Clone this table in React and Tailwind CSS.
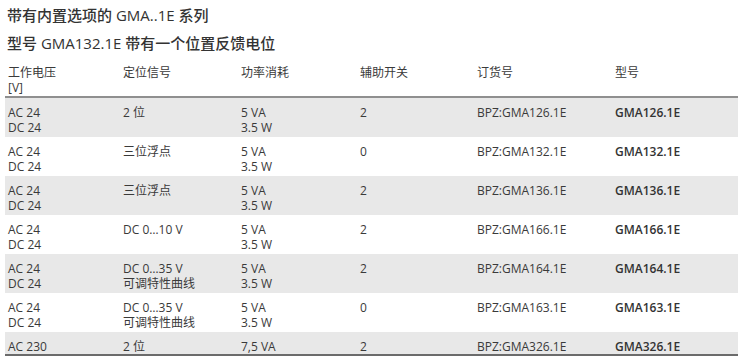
import React from 'react';

const rows = [
  { v: ['AC 24', 'DC 24'], sig: ['2 位'], pow: ['5 VA', '3.5 W'], aux: '2', order: 'BPZ:GMA126.1E', type: 'GMA126.1E' },
  { v: ['AC 24', 'DC 24'], sig: ['三位浮点'], pow: ['5 VA', '3.5 W'], aux: '0', order: 'BPZ:GMA132.1E', type: 'GMA132.1E' },
  { v: ['AC 24', 'DC 24'], sig: ['三位浮点'], pow: ['5 VA', '3.5 W'], aux: '2', order: 'BPZ:GMA136.1E', type: 'GMA136.1E' },
  { v: ['AC 24', 'DC 24'], sig: ['DC 0…10 V'], pow: ['5 VA', '3.5 W'], aux: '2', order: 'BPZ:GMA166.1E', type: 'GMA166.1E' },
  { v: ['AC 24', 'DC 24'], sig: ['DC 0…35 V', '可调特性曲线'], pow: ['5 VA', '3.5 W'], aux: '2', order: 'BPZ:GMA164.1E', type: 'GMA164.1E' },
  { v: ['AC 24', 'DC 24'], sig: ['DC 0…35 V', '可调特性曲线'], pow: ['5 VA', '3.5 W'], aux: '0', order: 'BPZ:GMA163.1E', type: 'GMA163.1E' },
  { v: ['AC 230'], sig: ['2 位'], pow: ['7,5 VA'], aux: '2', order: 'BPZ:GMA326.1E', type: 'GMA326.1E' },
];

const cols = 'grid grid-cols-[115px_118px_119px_117px_138px_1fr]';

const Lines = ({ items }) => (
  <div className="pl-[3px]">
    {items.map((t) => (
      <div key={t} className="leading-[15px]">{t}</div>
    ))}
  </div>
);

const App = () => {
  return (
    <div
      className="w-[740px] h-[364px] bg-white text-[#3a3a3a] overflow-hidden"
      style={{ fontFamily: '"Open Sans", "Noto Sans CJK SC", sans-serif' }}
    >
      <div className="pt-[5px] pl-[7px] text-[15px] leading-[20px] font-medium text-[#333]">
        <div>带有内置选项的 GMA..1E 系列</div>
        <div className="mt-[8px]">型号 GMA132.1E 带有一个位置反馈电位</div>
      </div>

      <div className="ml-[5px] mr-[2px] mt-[12px] text-[12px]">
        {/* header */}
        <div className={`${cols} border-b-2 border-[#8f8f8f] pb-[1px]`}>
          <Lines items={['工作电压', '[V]']} />
          <Lines items={['定位信号']} />
          <Lines items={['功率消耗']} />
          <Lines items={['辅助开关']} />
          <Lines items={['订货号']} />
          <Lines items={['型号']} />
        </div>

        {rows.map((r, i) => (
          <div
            key={r.order}
            className={`${cols} pt-[7px] ${i === rows.length - 1 ? 'pb-0 border-b-2 border-[#6b6b6b]' : 'pb-[2px]'} ${i % 2 === 0 ? 'bg-[#e8e8e8]' : 'bg-white'}`}
          >
            <Lines items={r.v} />
            <Lines items={r.sig} />
            <Lines items={r.pow} />
            <Lines items={[r.aux]} />
            <Lines items={[r.order]} />
            <div className="pl-[3px] leading-[15px] font-semibold text-[#333]">{r.type}</div>
          </div>
        ))}
      </div>
    </div>
  );
};

export default App;
